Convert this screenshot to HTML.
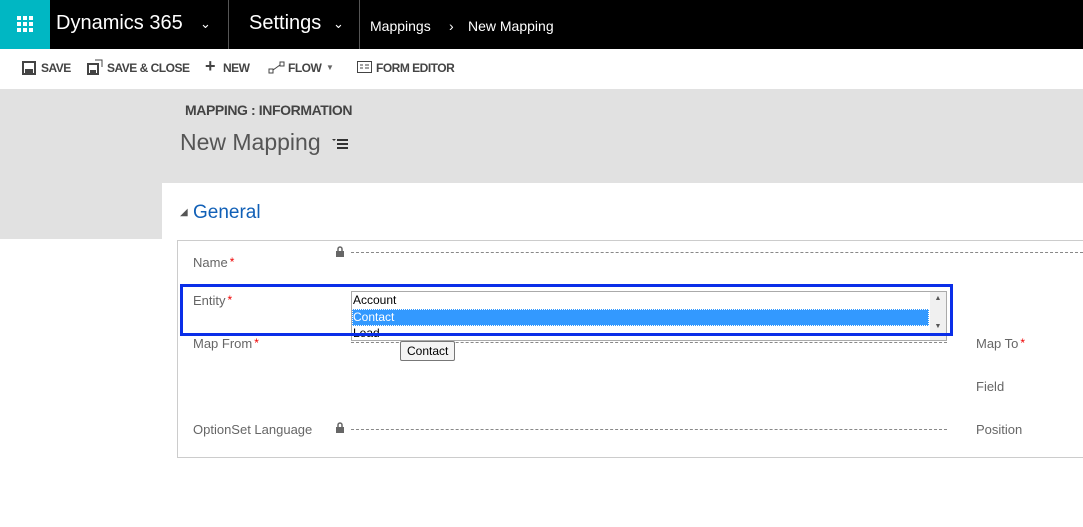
<!DOCTYPE html>
<html><head><style>
*{margin:0;padding:0;box-sizing:border-box}
body{width:1083px;height:527px;overflow:hidden;background:#fff;font-family:"Segoe UI","Liberation Sans",sans-serif;position:relative}
.a{position:absolute;white-space:nowrap}
.lbl{color:#666;font-size:13px}
.star{color:#e00;font-size:12px;vertical-align:top;margin-left:2px}
.dash{position:absolute;border-top:1px dashed #888;height:0}
.tb{font-size:12px;font-weight:bold;color:#444;top:61px;letter-spacing:-0.5px}
</style></head><body>
<div class="a" style="left:0;top:0;width:1083px;height:49px;background:#000"></div>
<div class="a" style="left:0;top:0;width:50px;height:49px;background:#00b7c3"></div>
<svg class="a" style="left:17px;top:16px" width="16" height="16"><g fill="#fff"><rect x="0" y="0" width="4" height="4"/><rect x="6" y="0" width="4" height="4"/><rect x="12" y="0" width="4" height="4"/><rect x="0" y="6" width="4" height="4"/><rect x="6" y="6" width="4" height="4"/><rect x="12" y="6" width="4" height="4"/><rect x="0" y="12" width="4" height="4"/><rect x="6" y="12" width="4" height="4"/><rect x="12" y="12" width="4" height="4"/></g></svg>
<div class="a" style="left:56px;top:12px;color:#fff;font-size:20px">Dynamics 365</div>
<div class="a" style="left:200px;top:16px;color:#fff;font-size:13px">⌄</div>
<div class="a" style="left:228px;top:0;width:1px;height:49px;background:#555"></div>
<div class="a" style="left:249px;top:12px;color:#fff;font-size:20px">Settings</div>
<div class="a" style="left:333px;top:16px;color:#fff;font-size:13px">⌄</div>
<div class="a" style="left:359px;top:0;width:1px;height:49px;background:#555"></div>
<div class="a" style="left:370px;top:18px;color:#fff;font-size:14px">Mappings</div>
<div class="a" style="left:449px;top:18px;color:#fff;font-size:14px">›</div>
<div class="a" style="left:468px;top:18px;color:#fff;font-size:14px">New Mapping</div>

<svg class="a" style="left:22px;top:61px" width="14" height="14"><rect x="1" y="1" width="12" height="12" fill="none" stroke="#444" stroke-width="2"/><rect x="3" y="8" width="8" height="5" fill="#444"/></svg>
<div class="a tb" style="left:41px">SAVE</div>
<svg class="a" style="left:87px;top:59px" width="16" height="16"><rect x="1" y="5" width="10" height="10" fill="none" stroke="#444" stroke-width="2"/><rect x="3" y="11" width="6" height="4" fill="#444"/><path d="M8 1h7v7" fill="none" stroke="#444"/></svg>
<div class="a tb" style="left:107px">SAVE &amp; CLOSE</div>
<div class="a" style="left:205px;top:56px;font-size:18px;font-weight:bold;color:#444">+</div>
<div class="a tb" style="left:223px">NEW</div>
<svg class="a" style="left:268px;top:61px" width="18" height="14"><rect x="1" y="8" width="4" height="4" fill="none" stroke="#444"/><rect x="12" y="1" width="4" height="4" fill="none" stroke="#444"/><path d="M5 9L12 4" stroke="#444"/></svg>
<div class="a tb" style="left:288px">FLOW</div>
<div class="a" style="left:326px;top:63px;font-size:8px;color:#666">▼</div>
<svg class="a" style="left:357px;top:61px" width="16" height="13"><rect x="0.5" y="0.5" width="14" height="11" fill="none" stroke="#444"/><path d="M3 4h3M3 7h3M8 4h4M8 7h4" stroke="#444"/></svg>
<div class="a tb" style="left:376px">FORM EDITOR</div>

<div class="a" style="left:0;top:89px;width:1083px;height:150px;background:#e1e1e1"></div>
<div class="a" style="left:162px;top:183px;width:921px;height:344px;background:#fff"></div>
<div class="a" style="left:185px;top:102px;font-size:14px;font-weight:bold;color:#444;letter-spacing:-0.4px">MAPPING : INFORMATION</div>
<div class="a" style="left:180px;top:129px;font-size:23px;color:#555">New Mapping</div>
<svg class="a" style="left:332px;top:138px" width="18" height="12"><path d="M0 1h4l-2 2z" fill="#333"/><path d="M5 2h11M5 6h11M5 10h11" stroke="#333" stroke-width="2"/></svg>
<div class="a" style="left:180px;top:207px;font-size:10px;color:#555">◢</div>
<div class="a" style="left:193px;top:202px;font-size:19px;color:#1160b7">General</div>

<div class="a" style="left:177px;top:240px;width:906px;height:218px;border:1px solid #ccc;border-right:none"></div>
<div class="a lbl" style="left:193px;top:255px">Name<span class="star">*</span></div>
<svg class="a" style="left:335px;top:246px" width="10" height="12"><rect x="1" y="5" width="8" height="6" fill="#666"/><path d="M3 5V3a2 2 0 0 1 4 0v2" fill="none" stroke="#666" stroke-width="1.5"/></svg>
<div class="dash" style="left:351px;top:252px;width:732px"></div>
<div class="a lbl" style="left:193px;top:293px">Entity<span class="star">*</span></div>
<div class="a" style="left:351px;top:291px;width:596px;height:50px;border:1px solid #aaa;overflow:hidden;font-size:12px;font-family:'Liberation Sans',sans-serif">
<div style="height:17px;line-height:17px;padding-left:1px;color:#000">Account</div>
<div style="height:17px;line-height:17px;padding-left:1px;background:#3399ff;color:#fff;width:577px;outline:1px dotted #fff;outline-offset:-1px">Contact</div>
<div style="height:17px;line-height:15px;padding-left:1px;color:#000">Lead</div>
<div style="position:absolute;right:0;top:0;width:16px;height:48px;background:#f0f0f0;font-size:7px;color:#555;text-align:center;line-height:14px">▲<br><br>▼</div>
</div>
<div class="a" style="left:180px;top:284px;width:773px;height:52px;border:3px solid #0a2ee8"></div>
<div class="a lbl" style="left:193px;top:336px">Map From<span class="star">*</span></div>
<div class="dash" style="left:351px;top:342px;width:596px"></div>
<div class="a" style="left:400px;top:341px;padding:2px 6px;border:1px solid #777;border-radius:2px;background:#f4f4f4;font-size:12px;color:#000">Contact</div>
<div class="a lbl" style="left:976px;top:336px">Map To<span class="star">*</span></div>
<div class="a lbl" style="left:976px;top:379px">Field</div>
<div class="a lbl" style="left:193px;top:422px">OptionSet Language</div>
<svg class="a" style="left:335px;top:422px" width="10" height="12"><rect x="1" y="5" width="8" height="6" fill="#666"/><path d="M3 5V3a2 2 0 0 1 4 0v2" fill="none" stroke="#666" stroke-width="1.5"/></svg>
<div class="dash" style="left:351px;top:429px;width:596px"></div>
<div class="a lbl" style="left:976px;top:422px">Position</div>
</body></html>
